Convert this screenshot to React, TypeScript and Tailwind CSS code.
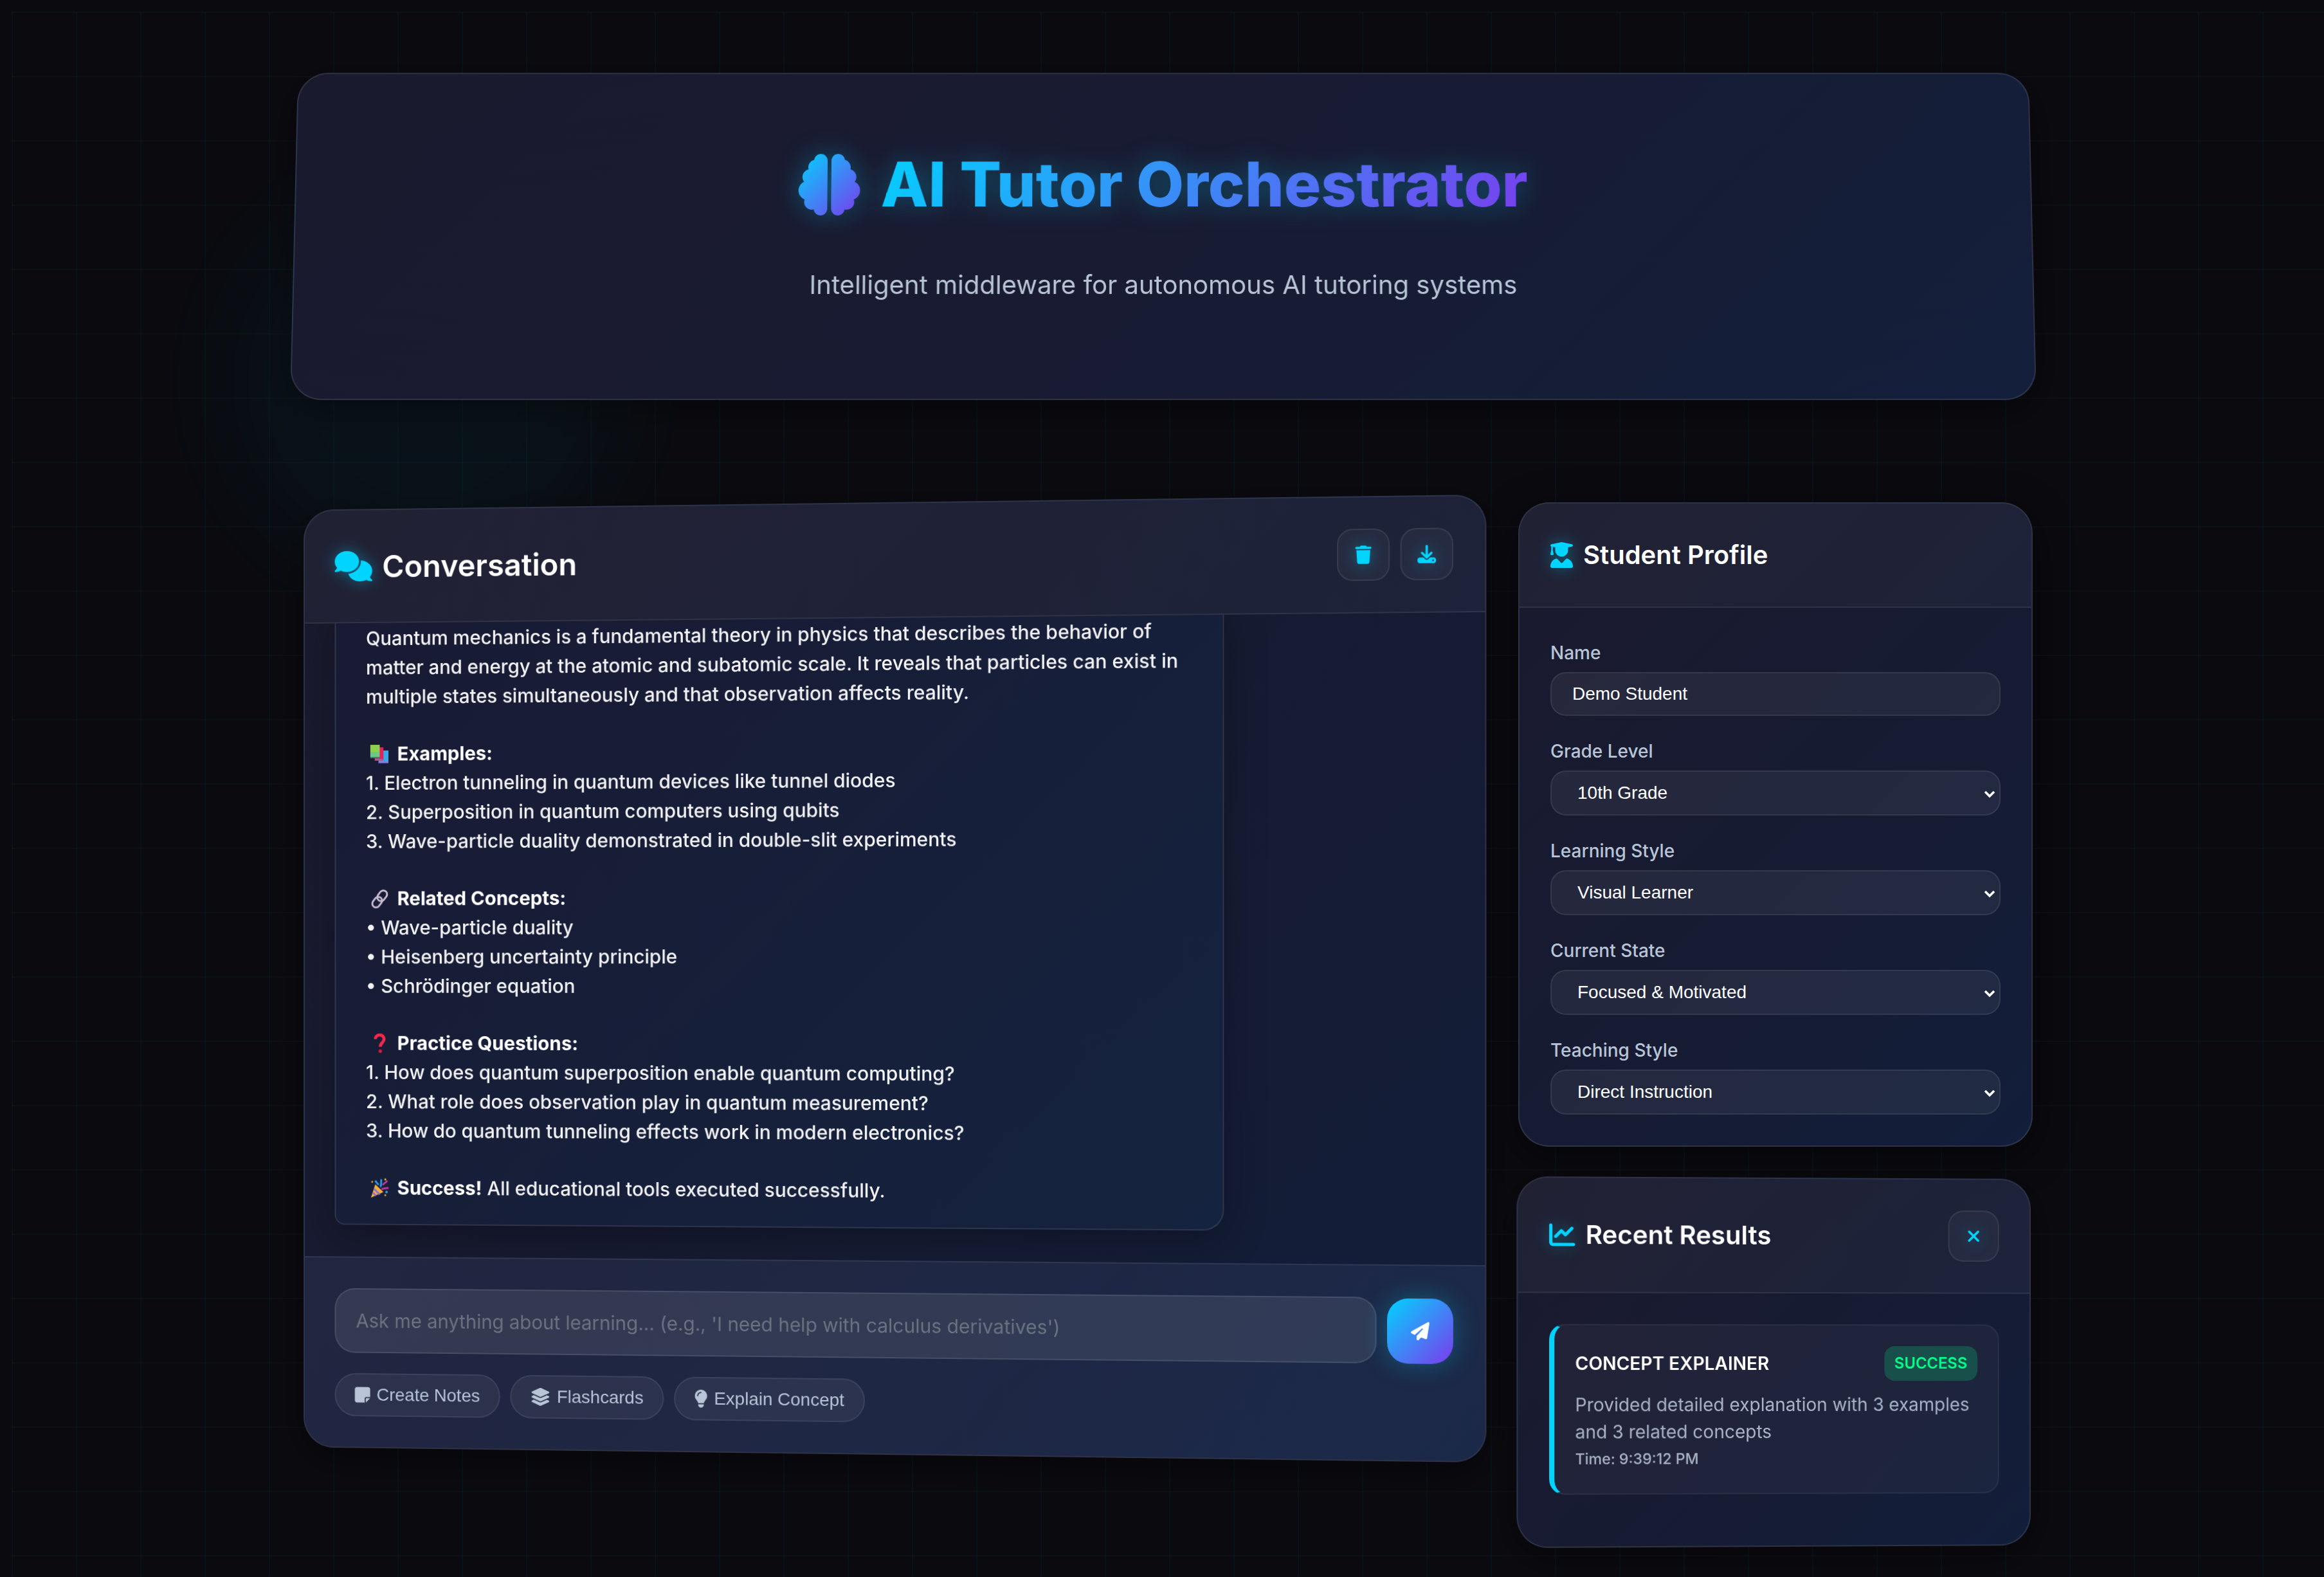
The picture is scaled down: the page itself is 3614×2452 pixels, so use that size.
import React from "react";
import {
  FaBrain,
  FaComments,
  FaTrash,
  FaDownload,
  FaUserGraduate,
  FaChartLine,
  FaXmark,
  FaPaperPlane,
  FaNoteSticky,
  FaLayerGroup,
  FaLightbulb,
} from "react-icons/fa6";

const panel =
  "overflow-hidden rounded-[48px] border-2 border-white/10 bg-[linear-gradient(135deg,#1a1a2e,#171b32_50%,#121e3a)] shadow-[0_16px_64px_rgba(0,0,0,0.4)]";
const glow = "text-[#00d4ff] drop-shadow-[0_0_12px_rgba(0,212,255,0.4)]";

function IconButton({ label, children }: { label: string; children: React.ReactNode }) {
  return (
    <button
      type="button"
      aria-label={label}
      className="flex size-20 items-center justify-center rounded-3xl border-2 border-white/8 bg-white/4"
    >
      <span className={"text-[28px] " + glow}>{children}</span>
    </button>
  );
}

function Emoji({ children }: { children: React.ReactNode }) {
  return (
    <svg viewBox="0 0 32 32" className="mr-3 ml-1.5 inline-block size-8 align-[-6px]" aria-hidden="true">
      {children}
    </svg>
  );
}

function Books() {
  return (
    <Emoji>
      <path d="M14 10h16v20H14z" fill="#3aa7e8" />
      <path d="M14 27h16v3H14z" fill="#7f7be0" />
      <path d="M8 5h14v20l-14 1z" fill="#e0245e" />
      <path d="M8 23h13v3H8z" fill="#b0578f" />
      <path d="M1 1h15v20H1z" fill="#8fd14f" />
      <path d="M1 12h15v9H1z" fill="#6fc985" />
      <path d="M1 20h15v2H1z" fill="#4b7d6c" />
    </Emoji>
  );
}

function Link() {
  return (
    <Emoji>
      <g fill="none" stroke="#c9bcd0" strokeWidth="3">
        <rect x="14" y="2" width="12" height="18" rx="6" transform="rotate(38 20 11)" />
        <rect x="6" y="12" width="12" height="18" rx="6" transform="rotate(38 12 21)" />
      </g>
    </Emoji>
  );
}

function Question() {
  return (
    <Emoji>
      <path
        d="M9 9c0-4 3-6.5 7-6.5s7 2.5 7 6.5c0 5-6 6-6 12"
        fill="none"
        stroke="#f5274e"
        strokeWidth="5"
      />
      <circle cx="17" cy="28" r="2.8" fill="#e0173f" />
    </Emoji>
  );
}

function Party() {
  return (
    <Emoji>
      <path d="M9 10l13 12L2 31z" fill="#f5b13d" />
      <path d="M7 17l9 9M5 23l5 5" stroke="#8a6fd1" strokeWidth="3" />
      <path d="M17 14c3-4 0-8 2-12M14 11c-1-3-4-4-5-7" fill="none" stroke="#2f9be8" strokeWidth="3" />
      <path d="M19 18c4-3 8-1 11-3M21 11c2-4 5-3 7-7" fill="none" stroke="#c2379b" strokeWidth="3" />
      <circle cx="27" cy="22" r="2" fill="#2f9be8" />
      <circle cx="4" cy="6" r="1.5" fill="#f0a52e" />
      <circle cx="25" cy="27" r="1.5" fill="#f0a52e" />
      <circle cx="25" cy="2" r="1.5" fill="#f0c52e" />
    </Emoji>
  );
}

function Section({ icon, title, lines }: { icon: React.ReactNode; title: string; lines: string[] }) {
  return (
    <div className="mt-11">
      <p>
        {icon}
        <strong className="font-bold text-white">{title}</strong>
      </p>
      {lines.map((line) => (
        <p key={line}>{line}</p>
      ))}
    </div>
  );
}

function Header() {
  return (
    <header className="rounded-[48px] border-2 border-white/10 bg-[linear-gradient(135deg,#1a1a2e,#181b32_50%,#131f3b)] px-12 py-24 text-center shadow-[0_16px_64px_rgba(0,0,0,0.4)] transform-[perspective(2000px)_rotateX(2deg)]">
      <svg className="absolute size-0" aria-hidden="true">
        <defs>
          <linearGradient id="brain" x1="0" y1="0" x2="1" y2="1">
            <stop offset="0" stopColor="#00d4ff" />
            <stop offset="1" stopColor="#7c3aed" />
          </linearGradient>
        </defs>
      </svg>
      <h1 className="mb-12 flex items-center justify-center gap-8 text-[96px] leading-[153px] font-extrabold drop-shadow-[0_0_20px_rgba(0,212,255,0.3)]">
        <FaBrain style={{ fill: "url(#brain)" }} />
        <span className="bg-[linear-gradient(135deg,#00d4ff,#7c3aed)] bg-clip-text text-transparent">
          AI Tutor Orchestrator
        </span>
      </h1>
      <p className="mb-12 text-[40px] leading-[64px] text-[#b8c5d6]">
        Intelligent middleware for autonomous AI tutoring systems
      </p>
    </header>
  );
}

const chips = [
  { label: "Create Notes", icon: <FaNoteSticky className="h-7 w-[25px]" /> },
  { label: "Flashcards", icon: <FaLayerGroup className="h-7 w-8" /> },
  { label: "Explain Concept", icon: <FaLightbulb className="h-7 w-[21px]" /> },
];

function Conversation() {
  return (
    <section className={panel + " transform-[perspective(2000px)_rotateY(-2deg)]"}>
      <div className="flex items-center justify-between border-b-2 border-white/8 bg-white/3 p-12">
        <h2 className="flex items-center gap-4 text-[48px] leading-[77px] font-semibold text-white">
          <FaComments className={"h-12 w-[60px] " + glow} />
          Conversation
        </h2>
        <div className="flex gap-4">
          <IconButton label="Clear conversation">
            <FaTrash />
          </IconButton>
          <IconButton label="Download conversation">
            <FaDownload />
          </IconButton>
        </div>
      </div>

      <div className="flex h-[999px] flex-col justify-end overflow-hidden px-12 pb-[50px]">
        <article className="w-4/5 rounded-[32px] rounded-bl-2xl border-2 border-white/10 bg-[linear-gradient(135deg,#191a33,#14233f)] px-12 pt-8 pb-[34px] text-[30px] leading-[46px] font-medium text-white/95 shadow-[0_16px_64px_rgba(0,0,0,0.3)]">
          <p>
            Quantum mechanics is a fundamental theory in physics that describes the behavior of matter and
            energy at the atomic and subatomic scale. It reveals that particles can exist in multiple states
            simultaneously and that observation affects reality.
          </p>
          <Section
            icon={<Books />}
            title="Examples:"
            lines={[
              "1. Electron tunneling in quantum devices like tunnel diodes",
              "2. Superposition in quantum computers using qubits",
              "3. Wave-particle duality demonstrated in double-slit experiments",
            ]}
          />
          <Section
            icon={<Link />}
            title="Related Concepts:"
            lines={["• Wave-particle duality", "• Heisenberg uncertainty principle", "• Schrödinger equation"]}
          />
          <Section
            icon={<Question />}
            title="Practice Questions:"
            lines={[
              "1. How does quantum superposition enable quantum computing?",
              "2. What role does observation play in quantum measurement?",
              "3. How do quantum tunneling effects work in modern electronics?",
            ]}
          />
          <p className="mt-11">
            <Party />
            <strong className="font-bold text-white">Success!</strong> All educational tools executed
            successfully.
          </p>
        </article>
      </div>

      <form className="border-t-2 border-white/8 bg-[#6478b4]/12 p-12" onSubmit={(e) => e.preventDefault()}>
        <div className="flex items-end gap-4">
          <input
            type="text"
            aria-label="Message"
            placeholder="Ask me anything about learning... (e.g., 'I need help with calculus derivatives')"
            className="h-[102px] min-w-0 flex-1 rounded-[32px] border-2 border-white/10 bg-white/9 px-8 text-[30px] text-white placeholder:text-[#6b7280]"
          />
          <button
            type="submit"
            aria-label="Send"
            className="flex size-[100px] items-center justify-center rounded-[32px] bg-[linear-gradient(135deg,#00d4ff,#7c3aed)] text-[28px] text-white shadow-[0_0_40px_rgba(0,212,255,0.3)]"
          >
            <FaPaperPlane />
          </button>
        </div>
        <div className="mt-8 flex gap-4">
          {chips.map(({ label, icon }) => (
            <button
              key={label}
              type="button"
              className="flex h-[68px] items-center gap-[10px] rounded-[40px] border-2 border-white/8 bg-white/6 px-[30px] font-['Liberation_Sans',sans-serif] text-[28px] text-[#b8c5d6]"
            >
              {icon}
              {label}
            </button>
          ))}
        </div>
      </form>
    </section>
  );
}

const selects = [
  { id: "grade", label: "Grade Level", value: "10th Grade" },
  { id: "learning", label: "Learning Style", value: "Visual Learner" },
  { id: "state", label: "Current State", value: "Focused & Motivated" },
  { id: "teaching", label: "Teaching Style", value: "Direct Instruction" },
];

const field =
  "w-full rounded-3xl border-2 border-white/8 bg-white/6 font-['Liberation_Sans',sans-serif] text-[28px] text-white";
const labelText = "mb-2 block text-[28px] leading-[44px] font-medium text-[#b8c5d6]";

function Profile() {
  return (
    <section className={panel}>
      <h3 className="flex items-center gap-4 border-b-2 border-white/8 bg-white/3 p-12 text-[40px] leading-[64px] font-semibold text-white">
        <FaUserGraduate className={"h-10 w-[35px] " + glow} />
        Student Profile
      </h3>
      <form className="flex flex-col gap-[33px] p-12">
        <div>
          <label htmlFor="name" className={labelText}>
            Name
          </label>
          <input id="name" type="text" defaultValue="Demo Student" className={field + " block h-[68px] px-8"} />
        </div>
        {selects.map(({ id, label, value }) => (
          <div key={id}>
            <label htmlFor={id} className={labelText}>
              {label}
            </label>
            <div className="relative">
              <select id={id} defaultValue={value} className={field + " block h-[70px] appearance-none px-10"}>
                <option className="text-black">{value}</option>
              </select>
              <svg
                viewBox="0 0 18 12"
                className="pointer-events-none absolute top-[31px] right-2 h-3 w-[18px]"
                aria-hidden="true"
              >
                <path d="M2 2l7 7 7-7" fill="none" stroke="#fff" strokeWidth="3.6" />
              </svg>
            </div>
          </div>
        ))}
      </form>
    </section>
  );
}

function Results() {
  return (
    <section className={panel + " transform-[perspective(2000px)_rotateY(2deg)]"}>
      <div className="flex items-center justify-between border-b-2 border-white/8 bg-white/3 p-12">
        <h3 className="flex items-center gap-4 text-[40px] leading-[64px] font-semibold text-white">
          <FaChartLine className={glow} />
          Recent Results
        </h3>
        <IconButton label="Close results">
          <FaXmark />
        </IconButton>
      </div>
      <div className="p-12">
        <article className="mb-8 rounded-3xl border-2 border-l-8 border-white/5 border-l-[#00d4ff] bg-white/4 p-8">
          <div className="mb-4 flex items-center justify-between">
            <h4 className="text-[28px] leading-[45px] font-semibold text-white uppercase">Concept Explainer</h4>
            <span className="rounded-2xl bg-[#00ff88]/20 px-4 py-2 text-[24px] leading-[38px] font-semibold text-[#00ff88]">
              SUCCESS
            </span>
          </div>
          <p className="text-[28px] leading-[42px] text-[#a9b5c7]">
            Provided detailed explanation with 3 examples and 3 related concepts
          </p>
          <p className="text-[23px] leading-[42px] font-medium text-[#a9b5c7]">Time: 9:39:12 PM</p>
        </article>
      </div>
    </section>
  );
}

export default function App() {
  return (
    <div className="relative isolate min-h-screen overflow-hidden bg-[#0a0a0f] font-[Inter,sans-serif]">
      <div className="absolute top-[12%] left-[10%] -z-10 size-[600px] rounded-full bg-[#00d4ff] opacity-4 blur-[80px]" />
      <div className="absolute inset-0 top-[18px] left-[18px] -z-10 bg-[linear-gradient(rgba(0,212,255,0.03)_2px,transparent_2px),linear-gradient(90deg,rgba(0,212,255,0.03)_2px,transparent_2px)] bg-size-[100px_100px]" />
      <main className="mx-auto max-w-[2800px] pt-28 pr-[46px] pb-12 pl-[50px]">
        <Header />
        <div className="mt-40 grid grid-cols-[minmax(0,1fr)_800px] items-start gap-16">
          <Conversation />
          <aside className="flex flex-col gap-12">
            <Profile />
            <Results />
          </aside>
        </div>
      </main>
    </div>
  );
}
